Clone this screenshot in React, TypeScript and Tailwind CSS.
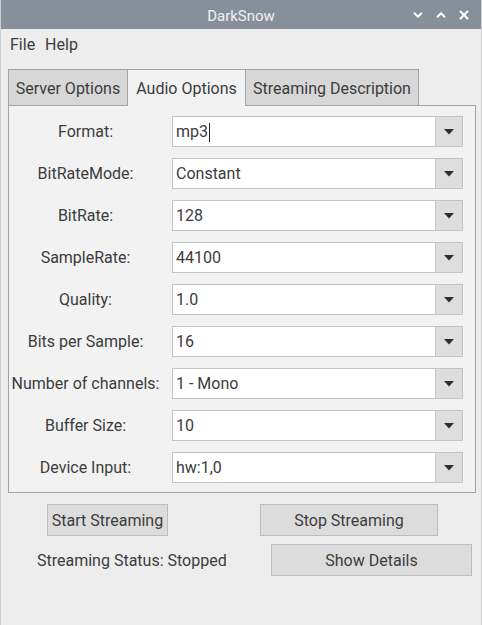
import { ChevronDown, ChevronUp, X } from 'lucide-react'

const rows = [
  { label: 'Format:', value: 'mp3', caret: true },
  { label: 'BitRateMode:', value: 'Constant' },
  { label: 'BitRate:', value: '128' },
  { label: 'SampleRate:', value: '44100' },
  { label: 'Quality:', value: '1.0' },
  { label: 'Bits per Sample:', value: '16' },
  { label: 'Number of channels:', value: '1 - Mono' },
  { label: 'Buffer Size:', value: '10' },
  { label: 'Device Input:', value: 'hw:1,0' },
]

function Combo({ value, caret }: { value: string; caret?: boolean }) {
  return (
    <div className="flex h-[31px] w-[291px] border border-[#c4c4c4] bg-white">
      <div className="flex flex-1 items-center pl-[3px] pt-px text-[16px] text-[#3c3c3c]">
        {value}
        {caret && <span className="ml-px inline-block h-[19px] w-px bg-[#222]" />}
      </div>
      <div className="flex w-[27px] items-center justify-center border-l border-[#c8c8c8] bg-[#dedede]">
        <svg width="10" height="6" viewBox="0 0 10 6">
          <path d="M0 0 H10 L5 5.5 Z" fill="#2e2e2e" />
        </svg>
      </div>
    </div>
  )
}

export default function App() {
  return (
    <div
      className="relative h-[625px] w-[482px] overflow-hidden border-x border-[#cfcfcf] bg-[#ededed] text-[#3c3c3c]"
      style={{ fontFamily: 'Roboto, "Noto Sans", sans-serif' }}
    >
      <div className="relative flex h-[29px] items-center justify-center bg-[#87909a] pt-[3px]">
        <span className="text-[15px] text-[#eef0f2]">DarkSnow</span>
        <div className="absolute right-[10px] top-0 flex h-full items-center gap-[9px] pt-px text-white">
          <ChevronDown size={14} strokeWidth={3.2} />
          <ChevronUp size={14} strokeWidth={3.2} />
          <X size={14} strokeWidth={3.4} />
        </div>
      </div>

      <div className="flex h-[29px] items-center gap-[10px] pl-[9px] pt-[2px] text-[16px]">
        <span>File</span>
        <span>Help</span>
      </div>

      <div className="ml-[7px] mt-[10px] flex h-[38px] items-stretch pt-px text-[16px]">
        <div className="flex w-[120px] items-center justify-center border border-[#a3a3a3] bg-[#d7d7d7] pt-[2px]">
          Server Options
        </div>
        <div className="relative z-10 flex w-[117px] items-center justify-center border-t border-[#a3a3a3] bg-[#f2f2f2] pt-[2px]">
          Audio Options
        </div>
        <div className="flex w-[174px] items-center justify-center border border-[#a3a3a3] bg-[#d7d7d7] pt-[2px]">
          Streaming Description
        </div>
      </div>

      <div className="mx-[7px] -mt-px flex w-[468px] flex-col gap-[11px] border border-[#a3a3a3] bg-[#f2f2f2] pb-[9px] pt-[10px]">
        {rows.map((r) => (
          <div key={r.label} className="flex items-center">
            <div className="w-[153px] pt-px text-center text-[16px]">{r.label}</div>
            <div className="ml-[10px]">
              <Combo value={r.value} caret={r.caret} />
            </div>
          </div>
        ))}
      </div>

      <div className="mt-[11px] flex text-[16px]">
        <button className="ml-[46px] h-[32px] w-[121px] border border-[#bdbdbd] bg-[#dcdcdc] pt-px">
          Start Streaming
        </button>
        <button className="ml-[92px] h-[32px] w-[178px] border border-[#bdbdbd] bg-[#dcdcdc] pt-px">
          Stop Streaming
        </button>
      </div>

      <div className="mt-[8px] flex items-center text-[16px]">
        <span className="ml-[36px] pt-px">Streaming Status: Stopped</span>
        <button className="ml-auto mr-[9px] h-[32px] w-[201px] border border-[#bdbdbd] bg-[#dcdcdc] pt-px">
          Show Details
        </button>
      </div>
    </div>
  )
}
